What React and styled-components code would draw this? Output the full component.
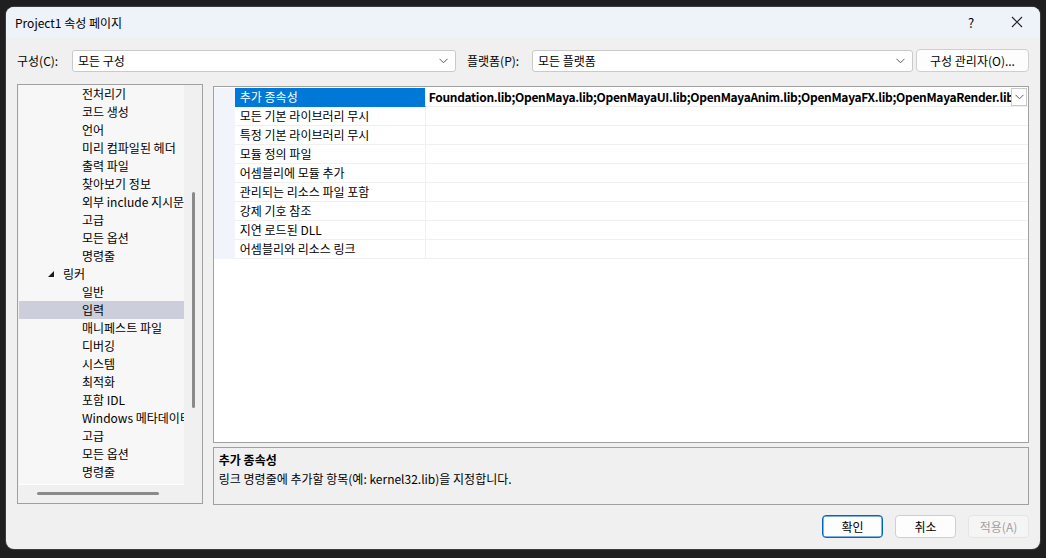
import React from 'react';
import styled, { createGlobalStyle } from 'styled-components';

const GlobalStyle = createGlobalStyle`
  html, body {
    margin: 0;
    padding: 0;
    background: #1f1f1f;
    width: 1046px;
    height: 558px;
    overflow: hidden;
  }
  body {
    font-family: "Noto Sans CJK KR", "Noto Sans", sans-serif;
    font-size: 12px;
    color: #000;
  }
`

const Screen = styled.div`
  width: 1046px;
  height: 558px;
  padding: 7px 0 0 6px;
  box-sizing: border-box;
`

const Window = styled.div`
  width: 1034px;
  height: 542px;
  background: #f0f0f0;
  border-radius: 8px;
  overflow: hidden;
  display: flex;
  flex-direction: column;
  box-shadow: 0 0 0 1px #3c3c3c;
`

const TitleBar = styled.div`
  height: 30px;
  background: #eef2f9;
  display: flex;
  align-items: center;
  padding: 0 0 0 9px;
  flex-shrink: 0;
`

const Title = styled.div`
  flex: 1;
  font-size: 12px;
`

const TitleButton = styled.div`
  width: 46px;
  height: 30px;
  display: flex;
  align-items: center;
  justify-content: center;
  font-size: 13px;
`

const ConfigRow = styled.div`
  display: flex;
  align-items: center;
  padding: 12px 11px 0 11px;
  height: 23px;
`

const Label = styled.div`
  width: ${p => p.w}px;
  flex-shrink: 0;
`

const Combo = styled.div`
  width: ${p => p.w}px;
  height: 22px;
  box-sizing: border-box;
  background: #fff;
  border: 1px solid #c9c9c9;
  border-radius: 3px;
  display: flex;
  align-items: center;
  padding: 0 0 0 5px;
  margin-right: ${p => p.mr || 0}px;
`

const ComboText = styled.div`
  flex: 1;
`

const Chevron = styled.svg`
  width: 9px;
  height: 6px;
  margin-right: ${p => p.mr ?? 7}px;
`

const Button = styled.div`
  width: ${p => p.w}px;
  height: ${p => p.h || 23}px;
  box-sizing: border-box;
  background: ${p => (p.disabled ? '#f5f5f5' : '#fdfdfd')};
  border: 1px solid ${p => (p.primary ? '#0067c0' : p.disabled ? '#e5e5e5' : '#cfcfcf')};
  box-shadow: ${p => (p.primary ? 'inset 0 0 0 0.5px #0067c0' : 'none')};
  color: ${p => (p.disabled ? '#a0a0a0' : '#000')};
  border-radius: 4px;
  display: flex;
  align-items: center;
  justify-content: center;
`

const Main = styled.div`
  display: flex;
  padding: 12px 11px 0 11px;
  gap: 10px;
  height: 421px;
`

const TreePanel = styled.div`
  width: 186px;
  height: 420px;
  box-sizing: border-box;
  border: 1px solid #a0a0a0;
  background: #f0f0f0;
  display: grid;
  grid-template-columns: 165px 1fr;
  grid-template-rows: 400px 1fr;
  padding: 0 0 0 1px;
`

const TreeList = styled.div`
  background: #f7f7f7;
  overflow: hidden;
  border-bottom: 1px solid #fff;
`

const TreeItem = styled.div`
  height: 18px;
  line-height: 18px;
  padding-left: ${p => p.indent}px;
  white-space: nowrap;
  background: ${p => (p.selected ? '#cccedb' : 'transparent')};
  display: flex;
  align-items: center;
`

const Expander = styled.svg`
  width: 6px;
  height: 6px;
  margin-right: 9px;
`

const VScroll = styled.div`
  display: flex;
  justify-content: center;
  padding-top: 107px;
`

const VThumb = styled.div`
  width: 3px;
  height: 216px;
  background: #8a8a8a;
  border-radius: 2px;
  margin-left: 2px;
`

const HScroll = styled.div`
  grid-column: 1 / 3;
  padding: 7px 0 0 18px;
`

const HThumb = styled.div`
  width: 122px;
  height: 3px;
  background: #8a8a8a;
  border-radius: 2px;
`

const RightCol = styled.div`
  width: 817px;
  display: flex;
  flex-direction: column;
  gap: 4px;
  padding-top: 2px;
`

const Grid = styled.div`
  height: 357px;
  box-sizing: border-box;
  border: 1px solid #a0a0a0;
  background: #fff;
  padding: 1px 0 0 0;
`

const GridRow = styled.div`
  display: grid;
  grid-template-columns: 21px 191px 1fr;
  height: 19px;
  box-sizing: border-box;
`

const Gutter = styled.div`
  background: #f1f5fb;
`

const NameCell = styled.div`
  background: ${p => (p.selected ? '#0078d7' : '#fff')};
  color: ${p => (p.selected ? '#fff' : '#000')};
  padding-left: 5px;
  line-height: 18px;
  border-bottom: 1px solid ${p => (p.selected ? '#0078d7' : '#f0f0f0')};
  border-right: 1px solid #f0f0f0;
  white-space: nowrap;
`

const ValueCell = styled.div`
  display: flex;
  align-items: center;
  padding-left: 3px;
  font-weight: bold;
  line-height: 18px;
  border-bottom: 1px solid #f0f0f0;
  overflow: hidden;
  white-space: nowrap;
`

const ValueText = styled.div`
  flex: 1;
  overflow: hidden;
  text-overflow: clip;
  letter-spacing: -0.32px;
`

const DropButton = styled.div`
  width: 16px;
  height: 18px;
  box-sizing: border-box;
  border: 1px solid #c9c9c9;
  background: #fff;
  display: flex;
  align-items: center;
  justify-content: center;
  flex-shrink: 0;
  margin-right: 1px;
`

const Description = styled.div`
  height: 58px;
  box-sizing: border-box;
  border: 1px solid #a0a0a0;
  padding: 2px 0 0 5px;
  line-height: 19px;
`

const DescTitle = styled.div`
  font-weight: bold;
`

const Footer = styled.div`
  display: flex;
  justify-content: flex-end;
  gap: 12px;
  padding: 10px 11px 0 0;
`

const treeItems = [
  ['전처리기'],
  ['코드 생성'],
  ['언어'],
  ['미리 컴파일된 헤더'],
  ['출력 파일'],
  ['찾아보기 정보'],
  ['외부 include 지시문'],
  ['고급'],
  ['모든 옵션'],
  ['명령줄'],
  ['링커', 'open'],
  ['일반'],
  ['입력', 'selected'],
  ['매니페스트 파일'],
  ['디버깅'],
  ['시스템'],
  ['최적화'],
  ['포함 IDL'],
  ['Windows 메타데이터'],
  ['고급'],
  ['모든 옵션'],
  ['명령줄'],
]

const props = [
  '추가 종속성',
  '모든 기본 라이브러리 무시',
  '특정 기본 라이브러리 무시',
  '모듈 정의 파일',
  '어셈블리에 모듈 추가',
  '관리되는 리소스 파일 포함',
  '강제 기호 참조',
  '지연 로드된 DLL',
  '어셈블리와 리소스 링크',
]

const ChevronIcon = ({ mr }) => (
  <Chevron mr={mr} viewBox="0 0 9 6">
    <polyline points="0.5,0.8 4.5,4.8 8.5,0.8" fill="none" stroke="#606060" strokeWidth="1" />
  </Chevron>
)

export default function App() {
  return (
    <>
      <GlobalStyle />
      <Screen>
        <Window>
          <TitleBar>
            <Title>Project1 속성 페이지</Title>
            <TitleButton>?</TitleButton>
            <TitleButton>
              <svg width="12" height="12" viewBox="0 0 12 12">
                <path d="M1 1 L11 11 M11 1 L1 11" stroke="#222" strokeWidth="1.1" />
              </svg>
            </TitleButton>
          </TitleBar>

          <ConfigRow>
            <Label w={55}>구성(C):</Label>
            <Combo w={384} mr={11}>
              <ComboText>모든 구성</ComboText>
              <ChevronIcon />
            </Combo>
            <Label w={65}>플랫폼(P):</Label>
            <Combo w={381} mr={3}>
              <ComboText>모든 플랫폼</ComboText>
              <ChevronIcon />
            </Combo>
            <Button w={113} h={23}>구성 관리자(O)...</Button>
          </ConfigRow>

          <Main>
            <TreePanel>
              <TreeList>
                {treeItems.map(([text, flag], i) => (
                  <TreeItem key={i} indent={flag === 'open' ? 29 : 63} selected={flag === 'selected'}>
                    {flag === 'open' && (
                      <Expander viewBox="0 0 6 6">
                        <polygon points="6,0 6,6 0,6" fill="#1a1a1a" />
                      </Expander>
                    )}
                    {text}
                  </TreeItem>
                ))}
              </TreeList>
              <VScroll>
                <VThumb />
              </VScroll>
              <HScroll>
                <HThumb />
              </HScroll>
            </TreePanel>

            <RightCol>
              <Grid>
                {props.map((p, i) => (
                  <GridRow key={i}>
                    <Gutter />
                    <NameCell selected={i === 0}>{p}</NameCell>
                    <ValueCell>
                      {i === 0 && (
                        <>
                          <ValueText>
                            Foundation.lib;OpenMaya.lib;OpenMayaUI.lib;OpenMayaAnim.lib;OpenMayaFX.lib;OpenMayaRender.lib;Image.lib
                          </ValueText>
                          <DropButton>
                            <ChevronIcon mr={0} />
                          </DropButton>
                        </>
                      )}
                    </ValueCell>
                  </GridRow>
                ))}
              </Grid>
              <Description>
                <DescTitle>추가 종속성</DescTitle>
                <div>링크 명령줄에 추가할 항목(예: kernel32.lib)을 지정합니다.</div>
              </Description>
            </RightCol>
          </Main>

          <Footer>
            <Button w={61} primary>확인</Button>
            <Button w={61}>취소</Button>
            <Button w={61} disabled>적용(A)</Button>
          </Footer>
        </Window>
      </Screen>
    </>
  );
}
